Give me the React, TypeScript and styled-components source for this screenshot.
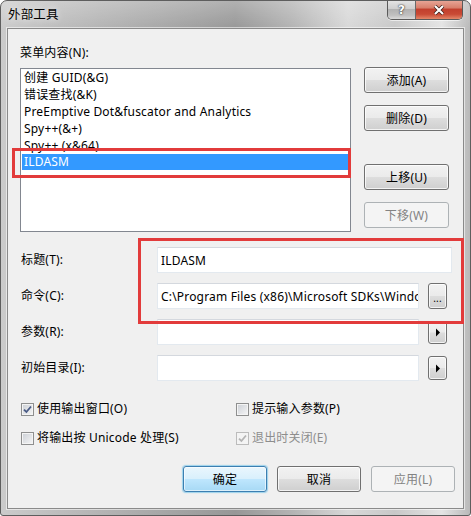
import React from "react";
import styled, { createGlobalStyle, css } from "styled-components";

const Global = createGlobalStyle`
  html, body { margin: 0; padding: 0; background: #ffffff; }
  body { font-family: "Noto Sans", "Noto Sans CJK SC", sans-serif; font-size: 12px; color: #000; letter-spacing: 0.18px; }
  * { box-sizing: border-box; }
`;

const Window = styled.div`
  position: relative;
  width: 471px;
  height: 516px;
  border: 1px solid #5e5e5e;
  border-radius: 7px 7px 3px 3px;
  background:
    linear-gradient(180deg, rgba(255,255,255,0.25) 0px, rgba(255,255,255,0) 28px),
    linear-gradient(90deg, #cbcbcb 0%, #bdbdbd 12%, #a6a6a6 35%, #979797 50%, #b3b3b3 62%, #d8d8d8 74%, #c8c8c8 84%, #e4e4e4 94%, #b9b9b9 100%);
  display: flex;
  flex-direction: column;
  padding: 0 6px 6px 6px;
  overflow: hidden;
`;

const TitleBar = styled.div`
  height: 27px;
  display: flex;
  align-items: flex-start;
`;

const TitleText = styled.div`
  margin-top: 5px;
  margin-left: 1px;
  font-size: 12.5px;
  line-height: 17px;
  color: #000;
  flex: 1;
  text-shadow: 0 0 6px rgba(255,255,255,0.9);
`;

const CaptionGroup = styled.div`
  display: flex;
  margin-right: 1px;
  margin-top: -1px;
  border: 1px solid #5a5a5a;
  border-top: none;
  border-radius: 0 0 5px 5px;
  overflow: hidden;
  box-shadow: 0 1px 0 rgba(255,255,255,0.6);
`;

const CaptionButton = styled.div<{ $close?: boolean }>`
  height: 19px;
  width: ${(p) => (p.$close ? 46 : 28)}px;
  display: flex;
  align-items: center;
  justify-content: center;
  color: #fff;
  font-weight: bold;
  font-family: "DejaVu Sans", sans-serif;
  font-size: 12px;
  border-right: ${(p) => (p.$close ? "none" : "1px solid #6a6a6a")};
  background: ${(p) =>
    p.$close
      ? "linear-gradient(180deg, #e9a99b 0%, #d8806d 40%, #c2402e 50%, #c94a35 75%, #e48769 100%)"
      : "linear-gradient(180deg, #e6e6e6 0%, #cfcfcf 45%, #b2b2b2 50%, #c0c0c0 80%, #dadada 100%)"};
  text-shadow: 0 0 2px #333, 0 0 1px #222;
`;

const Client = styled.div`
  flex: 1;
  background: #f0f0f0;
  border: 1px solid #8a8a8a;
  box-shadow: 0 0 0 1px rgba(255,255,255,0.55);
  padding: 16px 11px 16px 12px;
  display: flex;
  flex-direction: column;
`;

const Label = styled.div`
  line-height: 16px;
  height: 16px;
  white-space: nowrap;
`;

const ListRow = styled.div`
  display: flex;
  margin-top: 7px;
  gap: 13px;
`;

const ListBox = styled.div`
  width: 331px;
  height: 164px;
  background: #fff;
  border: 1px solid #828790;
  padding: 0 1px;
`;

const ListItem = styled.div<{ $selected?: boolean }>`
  height: 17px;
  line-height: 17px;
  padding-left: 2px;
  white-space: nowrap;
  overflow: hidden;
  ${(p) =>
    p.$selected &&
    css`
      background: #3399ff;
      color: #fff;
      height: 16px;
      line-height: 16px;
    `}
`;

const ButtonColumn = styled.div`
  display: flex;
  flex-direction: column;
  margin-top: -1px;
`;

const Button = styled.div<{ $w?: number; $default?: boolean; $disabled?: boolean; $mt?: number }>`
  width: ${(p) => p.$w ?? 85}px;
  height: 26px;
  margin-top: ${(p) => p.$mt ?? 0}px;
  border: 1px solid #707070;
  border-radius: 3px;
  display: flex;
  align-items: center;
  justify-content: center;
  white-space: nowrap;
  color: #000;
  background: linear-gradient(180deg, #f2f2f2 0%, #ebebeb 48%, #dddddd 52%, #cfcfcf 100%);
  box-shadow: inset 0 0 0 1px rgba(255,255,255,0.75);
  ${(p) =>
    p.$default &&
    css`
      border-color: #3c7fb1;
      background: linear-gradient(180deg, #eaf6fd 0%, #d9f0fc 48%, #bee6fd 52%, #a7d9f5 100%);
      box-shadow: inset 0 0 0 1px rgba(255,255,255,0.6), 0 0 1px 1px rgba(72,180,232,0.5);
    `}
  ${(p) =>
    p.$disabled &&
    css`
      border-color: #adb2b5;
      background: #f4f4f4;
      color: #838383;
      box-shadow: none;
    `}
`;

const Fields = styled.div`
  margin-top: 15px;
  display: grid;
  grid-template-columns: 137px 262px 9px 19px 5px;
  grid-auto-rows: 26px;
  row-gap: 10px;
  align-items: center;
`;

const FieldLabel = styled.div`
  grid-column: 1;
  line-height: 16px;
  padding-left: 1px;
  white-space: nowrap;
`;

const TextBox = styled.input<{ $wide?: boolean }>`
  grid-column: ${(p) => (p.$wide ? "2 / 6" : "2")};
  height: 26px;
  width: 100%;
  border: 1px solid #e3e9ef;
  border-top-color: #d4d8de;
  background: #fff;
  font: inherit;
  font-size: 12px;
  letter-spacing: 0.18px;
  color: #000;
  padding: 0 0 0 3px;
  outline: none;
  margin: 0;
`;

const SmallButton = styled.div<{ $h?: number }>`
  grid-column: 4;
  width: 19px;
  height: ${(p) => p.$h ?? 26}px;
  border: 1px solid #707070;
  border-radius: 3px;
  background: linear-gradient(180deg, #f2f2f2 0%, #ebebeb 48%, #dddddd 52%, #cfcfcf 100%);
  box-shadow: inset 0 0 0 1px rgba(255,255,255,0.75);
  display: flex;
  align-items: center;
  justify-content: center;
  font-size: 10px;
  line-height: 10px;
  color: #000;
  padding-top: 3px;
`;

const Checks = styled.div`
  margin-top: 20px;
  display: grid;
  grid-template-columns: 215px 1fr;
  grid-auto-rows: 16px;
  row-gap: 13px;
  padding-left: 1px;
`;

const CheckItem = styled.div<{ $disabled?: boolean }>`
  display: flex;
  align-items: center;
  gap: 2px;
  line-height: 16px;
  white-space: nowrap;
  color: ${(p) => (p.$disabled ? "#8d8d8d" : "#000")};
`;

const CheckBox = styled.span<{ $disabled?: boolean }>`
  width: 13px;
  height: 13px;
  border: 1px solid ${(p) => (p.$disabled ? "#bcbcbc" : "#8e8f8f")};
  background: ${(p) =>
    p.$disabled ? "#f4f4f4" : "linear-gradient(135deg, #cbcfd5 0%, #f6f6f6 100%)"};
  box-shadow: inset 0 0 0 1px #f4f4f4;
  display: inline-flex;
  align-items: center;
  justify-content: center;
  margin-right: 1px;
  flex: none;
`;

const Footer = styled.div`
  margin-top: 20px;
  display: flex;
  justify-content: flex-end;
  gap: 10px;
  margin-right: -3px;
`;

const Annotation = styled.div<{ $x: number; $y: number; $w: number; $h: number }>`
  position: absolute;
  left: ${(p) => p.$x}px;
  top: ${(p) => p.$y}px;
  width: ${(p) => p.$w}px;
  height: ${(p) => p.$h}px;
  border: 3px solid #e23b3b;
  pointer-events: none;
`;

const Check = ({ disabled }: { disabled?: boolean }) => (
  <svg width="9" height="9" viewBox="0 0 9 9">
    <path
      d="M1 4.6 L3.4 7 L8 1.5"
      fill="none"
      stroke={disabled ? "#b4b4b4" : "#4a5b86"}
      strokeWidth="1.8"
    />
  </svg>
);

const Arrow = () => (
  <svg width="6" height="9" viewBox="0 0 6 9" style={{ marginTop: -3 }}>
    <path d="M1 0.5 L5 4.5 L1 8.5 Z" fill="#000" />
  </svg>
);

const items = [
  "创建 GUID(&G)",
  "错误查找(&K)",
  "PreEmptive Dot&fuscator and Analytics",
  "Spy++(&+)",
  "Spy++ (x&64)",
  "ILDASM",
];

export default function App() {
  return (
    <>
      <Global />
      <Window>
        <TitleBar>
          <TitleText>外部工具</TitleText>
          <CaptionGroup>
            <CaptionButton>?</CaptionButton>
            <CaptionButton $close>
              <svg width="12" height="10" viewBox="0 0 12 10">
                <path d="M2 1 L10 9 M10 1 L2 9" stroke="#3a1a14" strokeWidth="3.6" />
                <path d="M2 1 L10 9 M10 1 L2 9" stroke="#fff" strokeWidth="2.2" />
              </svg>
            </CaptionButton>
          </CaptionGroup>
        </TitleBar>
        <Client>
          <Label>菜单内容(N):</Label>
          <ListRow>
            <ListBox>
              {items.map((it, i) => (
                <ListItem key={i} $selected={i === items.length - 1}>
                  {it}
                </ListItem>
              ))}
            </ListBox>
            <ButtonColumn>
              <Button>添加(A)</Button>
              <Button $mt={12}>删除(D)</Button>
              <Button $mt={33}>上移(U)</Button>
              <Button $mt={12} $disabled>
                下移(W)
              </Button>
            </ButtonColumn>
          </ListRow>
          <Fields>
            <FieldLabel>标题(T):</FieldLabel>
            <TextBox $wide readOnly defaultValue="ILDASM" />
            <FieldLabel>命令(C):</FieldLabel>
            <TextBox
              readOnly
              defaultValue="C:\Program Files (x86)\Microsoft SDKs\Windows\v10.0A\bin\NETFX 4.6.1 Tools\ildasm.exe"
            />
            <SmallButton>...</SmallButton>
            <FieldLabel>参数(R):</FieldLabel>
            <TextBox readOnly defaultValue="" />
            <SmallButton $h={23}>
              <Arrow />
            </SmallButton>
            <FieldLabel>初始目录(I):</FieldLabel>
            <TextBox readOnly defaultValue="" />
            <SmallButton $h={24}>
              <Arrow />
            </SmallButton>
          </Fields>
          <Checks>
            <CheckItem>
              <CheckBox>
                <Check />
              </CheckBox>
              使用输出窗口(O)
            </CheckItem>
            <CheckItem>
              <CheckBox />
              提示输入参数(P)
            </CheckItem>
            <CheckItem>
              <CheckBox />
              将输出按 Unicode 处理(S)
            </CheckItem>
            <CheckItem $disabled>
              <CheckBox $disabled>
                <Check disabled />
              </CheckBox>
              退出时关闭(E)
            </CheckItem>
          </Checks>
          <Footer>
            <Button $w={84} $default>
              确定
            </Button>
            <Button $w={84}>取消</Button>
            <Button $w={84} $disabled>
              应用(L)
            </Button>
          </Footer>
        </Client>
        <Annotation $x={11} $y={147} $w={339} $h={30} />
        <Annotation $x={137} $y={237} $w={326} $h={86} />
      </Window>
    </>
  );
}
